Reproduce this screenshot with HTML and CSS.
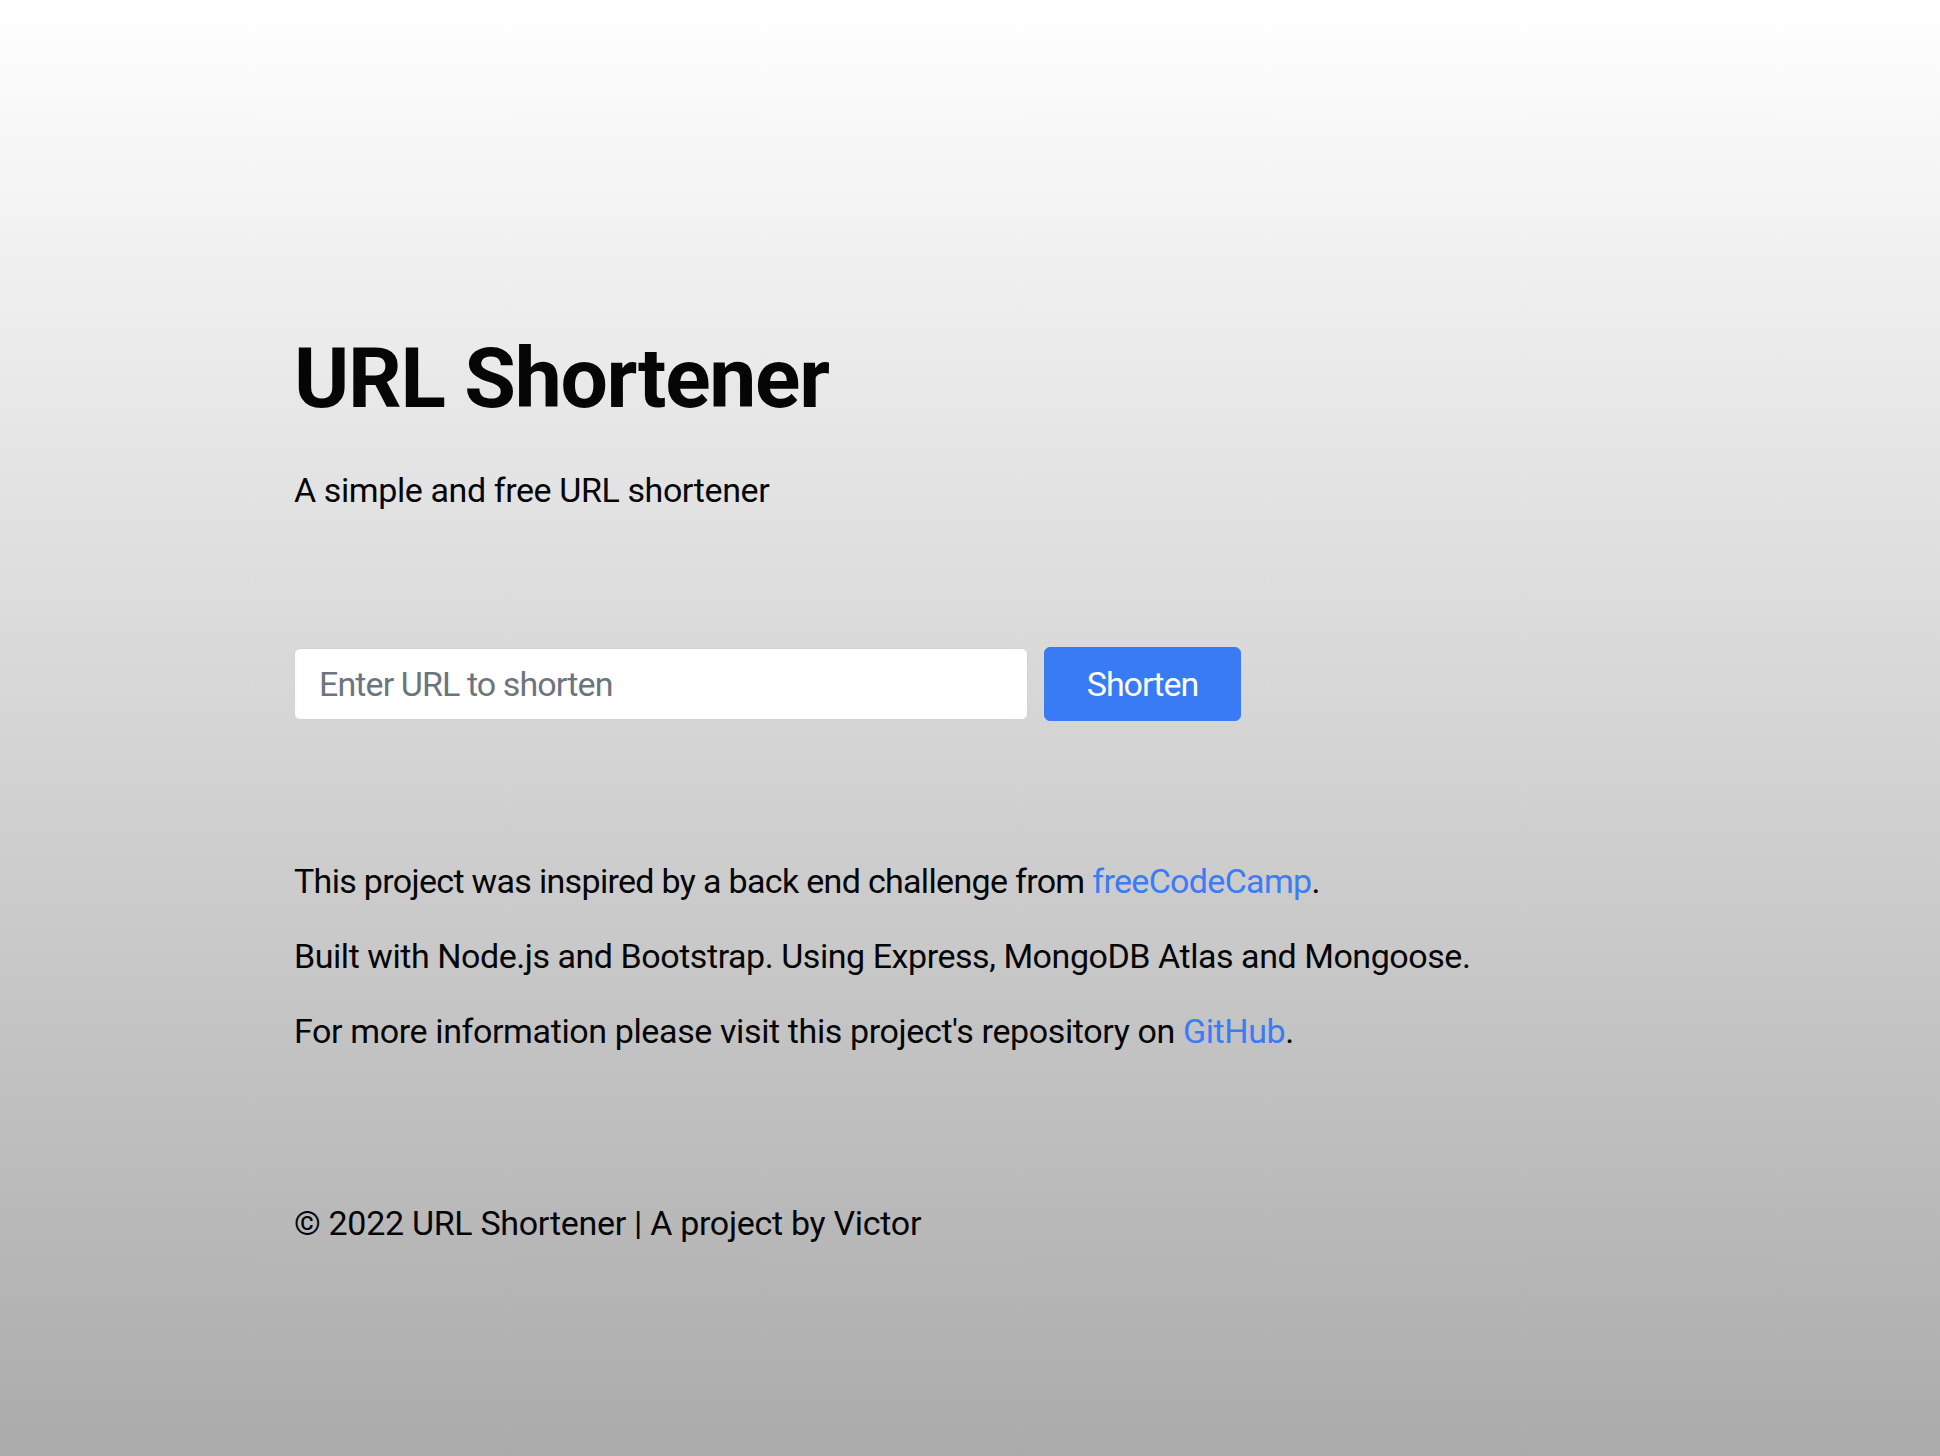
FILE: index.html
```html
<!DOCTYPE html>
<html lang="en">
<head>
<meta charset="utf-8">
<title>URL Shortener</title>
<link rel="stylesheet" href="styles.css">
</head>
<body>
<main class="page">
  <header class="hero">
    <h1 class="title">URL Shortener</h1>
    <p class="lead">A simple and free URL shortener</p>
  </header>
  <form class="shorten-form" onsubmit="return false;">
    <input class="url-input" type="text" placeholder="Enter URL to shorten">
    <button class="btn-primary" type="submit">Shorten</button>
  </form>
  <section class="info">
    <p class="info-tight">This project was inspired by a back end challenge from <a class="link" href="#">freeCodeCamp</a>.</p>
    <p>Built with Node.js and Bootstrap. Using Express, MongoDB Atlas and Mongoose.</p>
    <p class="info-loose">For more information please visit this project's repository on <a class="link" href="#">GitHub</a>.</p>
  </section>
  <footer class="footer">© 2022 URL Shortener | A project by Victor</footer>
</main>
</body>
</html>
```
FILE: styles.css
```css
html, body {
  margin: 0;
  padding: 0;
}
body {
  min-height: 100vh;
  background: linear-gradient(180deg, #ffffff 0%, #ababab 100%);
  font-family: Roboto, "Noto Sans", sans-serif;
  color: #050505;
}
.page {
  display: flex;
  flex-direction: column;
  align-items: flex-start;
  padding: 329px 0 0 294px;
  box-sizing: border-box;
  min-height: 100vh;
}
.hero {
  display: flex;
  flex-direction: column;
}
.title {
  margin: 0;
  font-size: 84px;
  line-height: 100px;
  font-weight: 700;
  letter-spacing: -1.3px;
}
.lead {
  margin: 36px 0 0;
  font-size: 34px;
  line-height: 51px;
  letter-spacing: -0.4px;
}
.shorten-form {
  display: flex;
  align-items: center;
  gap: 16px;
  margin-top: 131px;
}
.url-input {
  box-sizing: border-box;
  width: 734px;
  height: 72px;
  padding: 0 24px;
  border: 1px solid #ced4da;
  border-radius: 6px;
  background: #fff;
  font-family: inherit;
  font-size: 34px;
  letter-spacing: -0.9px;
  color: #212529;
  outline: none;
}
.url-input::placeholder {
  color: #6c757d;
}
.btn-primary {
  box-sizing: border-box;
  width: 197px;
  height: 74px;
  border: 1px solid #387bf5;
  border-radius: 6px;
  background: #387bf5;
  color: #fff;
  font-family: inherit;
  font-size: 34px;
  letter-spacing: -1px;
  padding: 0;
  cursor: pointer;
}
.info {
  display: flex;
  flex-direction: column;
  gap: 24px;
  margin-top: 135px;
}
.info p {
  margin: 0;
  font-size: 34px;
  line-height: 51px;
  letter-spacing: -0.45px;
}
.info .info-tight {
  letter-spacing: -0.68px;
}
.info .info-loose {
  letter-spacing: -0.38px;
}
.link {
  color: #3b7cf6;
  text-decoration: none;
}
.footer {
  margin-top: 141px;
  font-size: 34px;
  line-height: 51px;
  letter-spacing: -0.3px;
}
```
